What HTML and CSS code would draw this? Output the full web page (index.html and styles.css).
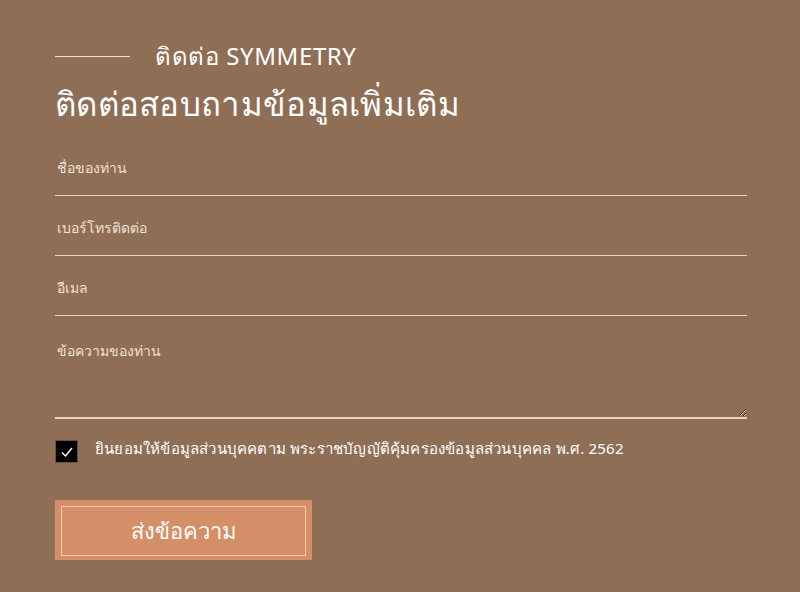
FILE: index.html
```html
<!DOCTYPE html>
<html lang="th">
<head>
  <meta charset="utf-8">
  <title>ติดต่อ SYMMETRY</title>
  <link rel="stylesheet" href="styles.css">
</head>
<body>
  <div class="contact">
    <div class="kicker">
      <span class="kicker-line"></span>
      <span class="kicker-text">ติดต่อ SYMMETRY</span>
    </div>
    <h1 class="title">ติดต่อสอบถามข้อมูลเพิ่มเติม</h1>
    <form class="form" onsubmit="return false">
      <input class="field" type="text" placeholder="ชื่อของท่าน">
      <input class="field" type="text" placeholder="เบอร์โทรติดต่อ">
      <input class="field" type="text" placeholder="อีเมล">
      <textarea class="field area" placeholder="ข้อความของท่าน"></textarea>
      <label class="consent">
        <span class="box">
          <svg width="14" height="14" viewBox="0 0 14 14"><path d="M2 7.5 L5.5 11 L12 3" fill="none" stroke="#fff" stroke-width="1.4"/></svg>
        </span>
        <span class="consent-text">ยินยอมให้ข้อมูลส่วนบุคคตาม พระราชบัญญัติคุ้มครองข้อมูลส่วนบุคคล พ.ศ. 2562</span>
      </label>
      <button class="send" type="submit"><span class="send-inner">ส่งข้อความ</span></button>
    </form>
  </div>
</body>
</html>
```

FILE: styles.css
```css
body {
  margin: 0;
  background: #8f6e56;
  font-family: "Noto Sans", "DejaVu Sans", sans-serif;
  color: #fff;
}
.contact {
  width: 692px;
  padding: 40px 0 0 55px;
}
.kicker {
  display: flex;
  align-items: center;
  gap: 25px;
}
.kicker-line {
  width: 75px;
  height: 1px;
  background: #f3e6da;
}
.kicker-text {
  font-size: 24px;
  letter-spacing: 0.6px;
  line-height: 32px;
}
.title {
  margin: 9px 0 27px;
  font-size: 33px;
  letter-spacing: 0.3px;
  font-weight: normal;
  line-height: 46px;
}
.form {
  display: flex;
  flex-direction: column;
}
.field {
  display: block;
  width: 100%;
  box-sizing: border-box;
  background: transparent;
  border: 0;
  border-bottom: 1px solid #e8d3bf;
  padding: 0 0 14px 2px;
  margin-bottom: 18px;
  height: 42px;
  font-family: inherit;
  font-size: 14px;
  color: #fff;
  outline: none;
}
.field::placeholder {
  color: #f1e2d6;
}
.area {
  height: 85px;
  padding-top: 6px;
  resize: vertical;
  border-bottom: 2px solid #e8d3bf;
  margin-bottom: 21px;
}
.consent {
  display: flex;
  align-items: flex-start;
  gap: 17px;
  font-size: 15px;
  letter-spacing: 0.2px;
}
.consent-text {
  line-height: 14px;
  padding-top: 1px;
}
.box {
  width: 21px;
  height: 21px;
  background: #000;
  border: 1px solid #6b5040;
  display: flex;
  align-items: center;
  justify-content: center;
  flex-shrink: 0;
}
.send {
  margin-top: 37px;
  width: 257px;
  height: 60px;
  padding: 6px;
  background: #d58f68;
  border: 0;
  cursor: pointer;
}
.send-inner {
  display: flex;
  align-items: center;
  justify-content: center;
  height: 100%;
  border: 1px solid #f0c9b0;
  font-family: "Noto Sans", "DejaVu Sans", sans-serif;
  font-size: 22px;
  color: #fff;
}
```
